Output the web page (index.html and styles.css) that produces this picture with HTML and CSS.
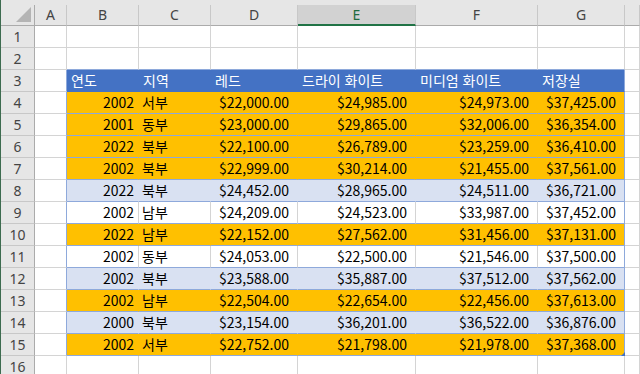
FILE: index.html
```html
<!DOCTYPE html>
<html lang="ko">
  <head>
    <meta charset="utf-8" />
    <title>판매 데이터</title>
    <link rel="stylesheet" href="styles.css">
  </head>
  <body>
    <div class="sheet">
      <!-- column letters -->
      <div class="cols colhead">
        <div class="corner">
          <svg width="15" height="15" viewBox="0 0 15 15"><polygon points="15,0 15,15 0,15" fill="#b4b4b4"/></svg>
        </div>
        <div class="ch">A</div>
        <div class="ch">B</div>
        <div class="ch">C</div>
        <div class="ch">D</div>
        <div class="ch selected">E</div>
        <div class="ch">F</div>
        <div class="ch">G</div>
        <div class="ch"></div>
      </div>

      <div class="cols row">
        <div class="rh">1</div>
        <div class="c"></div><div class="c"></div><div class="c"></div><div class="c"></div>
        <div class="c"></div><div class="c"></div><div class="c"></div><div class="c"></div>
      </div>
      <div class="cols row above">
        <div class="rh">2</div>
        <div class="c"></div><div class="c"></div><div class="c"></div><div class="c"></div>
        <div class="c"></div><div class="c"></div><div class="c"></div><div class="c"></div>
      </div>

      <!-- table header -->
      <div class="cols row head">
        <div class="rh">3</div>
        <div class="c edge"></div>
        <div class="c t">연도</div>
        <div class="c t">지역</div>
        <div class="c t">레드</div>
        <div class="c t">드라이 화이트</div>
        <div class="c t">미디엄 화이트</div>
        <div class="c t last">저장실</div>
        <div class="c"></div>
      </div>

      <div class="cols row gold">
        <div class="rh">4</div>
        <div class="c edge"></div>
        <div class="c t yr">2002</div><div class="c t">서부</div>
        <div class="c t cur">$22,000.00</div><div class="c t cur">$24,985.00</div>
        <div class="c t cur">$24,973.00</div><div class="c t cur last">$37,425.00</div>
        <div class="c"></div>
      </div>
      <div class="cols row gold">
        <div class="rh">5</div>
        <div class="c edge"></div>
        <div class="c t yr">2001</div><div class="c t">동부</div>
        <div class="c t cur">$23,000.00</div><div class="c t cur">$29,865.00</div>
        <div class="c t cur">$32,006.00</div><div class="c t cur last">$36,354.00</div>
        <div class="c"></div>
      </div>
      <div class="cols row gold">
        <div class="rh">6</div>
        <div class="c edge"></div>
        <div class="c t yr">2022</div><div class="c t">북부</div>
        <div class="c t cur">$22,100.00</div><div class="c t cur">$26,789.00</div>
        <div class="c t cur">$23,259.00</div><div class="c t cur last">$36,410.00</div>
        <div class="c"></div>
      </div>
      <div class="cols row gold">
        <div class="rh">7</div>
        <div class="c edge"></div>
        <div class="c t yr">2002</div><div class="c t">북부</div>
        <div class="c t cur">$22,999.00</div><div class="c t cur">$30,214.00</div>
        <div class="c t cur">$21,455.00</div><div class="c t cur last">$37,561.00</div>
        <div class="c"></div>
      </div>
      <div class="cols row pale">
        <div class="rh">8</div>
        <div class="c edge"></div>
        <div class="c t yr">2022</div><div class="c t">북부</div>
        <div class="c t cur">$24,452.00</div><div class="c t cur">$28,965.00</div>
        <div class="c t cur">$24,511.00</div><div class="c t cur last">$36,721.00</div>
        <div class="c"></div>
      </div>
      <div class="cols row plain">
        <div class="rh">9</div>
        <div class="c edge"></div>
        <div class="c t yr">2002</div><div class="c t">남부</div>
        <div class="c t cur">$24,209.00</div><div class="c t cur">$24,523.00</div>
        <div class="c t cur">$33,987.00</div><div class="c t cur last">$37,452.00</div>
        <div class="c"></div>
      </div>
      <div class="cols row gold">
        <div class="rh">10</div>
        <div class="c edge"></div>
        <div class="c t yr">2022</div><div class="c t">남부</div>
        <div class="c t cur">$22,152.00</div><div class="c t cur">$27,562.00</div>
        <div class="c t cur">$31,456.00</div><div class="c t cur last">$37,131.00</div>
        <div class="c"></div>
      </div>
      <div class="cols row plain">
        <div class="rh">11</div>
        <div class="c edge"></div>
        <div class="c t yr">2002</div><div class="c t">동부</div>
        <div class="c t cur">$24,053.00</div><div class="c t cur">$22,500.00</div>
        <div class="c t cur">$21,546.00</div><div class="c t cur last">$37,500.00</div>
        <div class="c"></div>
      </div>
      <div class="cols row pale">
        <div class="rh">12</div>
        <div class="c edge"></div>
        <div class="c t yr">2002</div><div class="c t">북부</div>
        <div class="c t cur">$23,588.00</div><div class="c t cur">$35,887.00</div>
        <div class="c t cur">$37,512.00</div><div class="c t cur last">$37,562.00</div>
        <div class="c"></div>
      </div>
      <div class="cols row gold">
        <div class="rh">13</div>
        <div class="c edge"></div>
        <div class="c t yr">2002</div><div class="c t">남부</div>
        <div class="c t cur">$22,504.00</div><div class="c t cur">$22,654.00</div>
        <div class="c t cur">$22,456.00</div><div class="c t cur last">$37,613.00</div>
        <div class="c"></div>
      </div>
      <div class="cols row pale">
        <div class="rh">14</div>
        <div class="c edge"></div>
        <div class="c t yr">2000</div><div class="c t">북부</div>
        <div class="c t cur">$23,154.00</div><div class="c t cur">$36,201.00</div>
        <div class="c t cur">$36,522.00</div><div class="c t cur last">$36,876.00</div>
        <div class="c"></div>
      </div>
      <div class="cols row gold">
        <div class="rh">15</div>
        <div class="c edge"></div>
        <div class="c t yr">2002</div><div class="c t">서부</div>
        <div class="c t cur">$22,752.00</div><div class="c t cur">$21,798.00</div>
        <div class="c t cur">$21,978.00</div><div class="c t cur last handle">$37,368.00</div>
        <div class="c"></div>
      </div>

      <div class="cols row">
        <div class="rh">16</div>
        <div class="c"></div><div class="c"></div><div class="c"></div><div class="c"></div>
        <div class="c"></div><div class="c"></div><div class="c"></div><div class="c"></div>
      </div>
    </div>
  </body>
</html>
```

FILE: styles.css
```css
/* page */
body {
  margin: 0;
  background: #fff;
  font-family: "Noto Sans CJK KR", "Noto Sans", sans-serif;
  font-size: 14px;
  color: #000;
  overflow: hidden;
}

/* the grid sheet */
.sheet {
  border-left: 1px solid #3d6b4f;
  padding-top: 5px;
  background: #e6e6e6;
}

.cols {
  display: grid;
  grid-template-columns: 34px 32px 72px 72px 87px 118px 122px 87px 1fr;
}

/* column letters */
.colhead {
  height: 21px;
}

.ch,
.corner {
  box-sizing: border-box;
  border-right: 1px solid #c8c8c8;
  border-bottom: 1px solid #ababab;
  background: #e6e6e6;
  color: #444;
  font-family: "Noto Sans", sans-serif;
  font-size: 14px;
  line-height: 19px;
  text-align: center;
}

.corner {
  border-right-color: #ababab;
  display: flex;
  align-items: flex-end;
  justify-content: flex-end;
  padding: 0 3px 3px 0;
}

.corner svg {
  display: block;
}

.ch.selected {
  background: #d2d2d2;
  color: #1e6b40;
  border-bottom: 2px solid #217346;
  line-height: 19px;
}

/* rows */
.row {
  height: 22px;
}

.rh {
  box-sizing: border-box;
  background: #e6e6e6;
  border-right: 1px solid #ababab;
  border-bottom: 1px solid #c8c8c8;
  color: #444;
  font-family: "Noto Sans", sans-serif;
  font-size: 14px;
  line-height: 21px;
  text-align: center;
}

.c {
  box-sizing: border-box;
  background: #fff;
  border-right: 1px solid #d4d4d4;
  border-bottom: 1px solid #d4d4d4;
  line-height: 21px;
  white-space: nowrap;
  overflow: hidden;
  padding: 0 3px;
}

.above .c:nth-child(n+3):nth-child(-n+8) {
  border-bottom-color: #8ea9db;
}

/* table cells */
.t {
  border-bottom-color: #8ea9db;
}

.edge {
  border-right-color: #8ea9db;
}

.t.last {
  border-right-color: #8ea9db;
}

.head .t {
  background: #4472c4;
  border-right-color: #4472c4;
  border-bottom-color: #4472c4;
  color: #fff;
  padding-left: 4px;
}

.head .t.last {
  border-right-color: #8ea9db;
}

.gold .t {
  background: #ffc000;
  border-right-color: #ffc000;
}

.pale .t {
  background: #d9e1f2;
  border-right-color: #d9e1f2;
}

.gold .t.last,
.pale .t.last {
  border-right-color: #8ea9db;
}

.yr {
  text-align: right;
  padding-right: 4px;
}

.cur {
  text-align: right;
  padding-right: 8px;
}

/* fill handle of the table */
.handle {
  position: relative;
  overflow: visible;
}

.handle::after {
  content: "";
  position: absolute;
  right: -1px;
  bottom: -1px;
  width: 0;
  height: 0;
  border-left: 4px solid transparent;
  border-bottom: 4px solid #4472c4;
}
```
